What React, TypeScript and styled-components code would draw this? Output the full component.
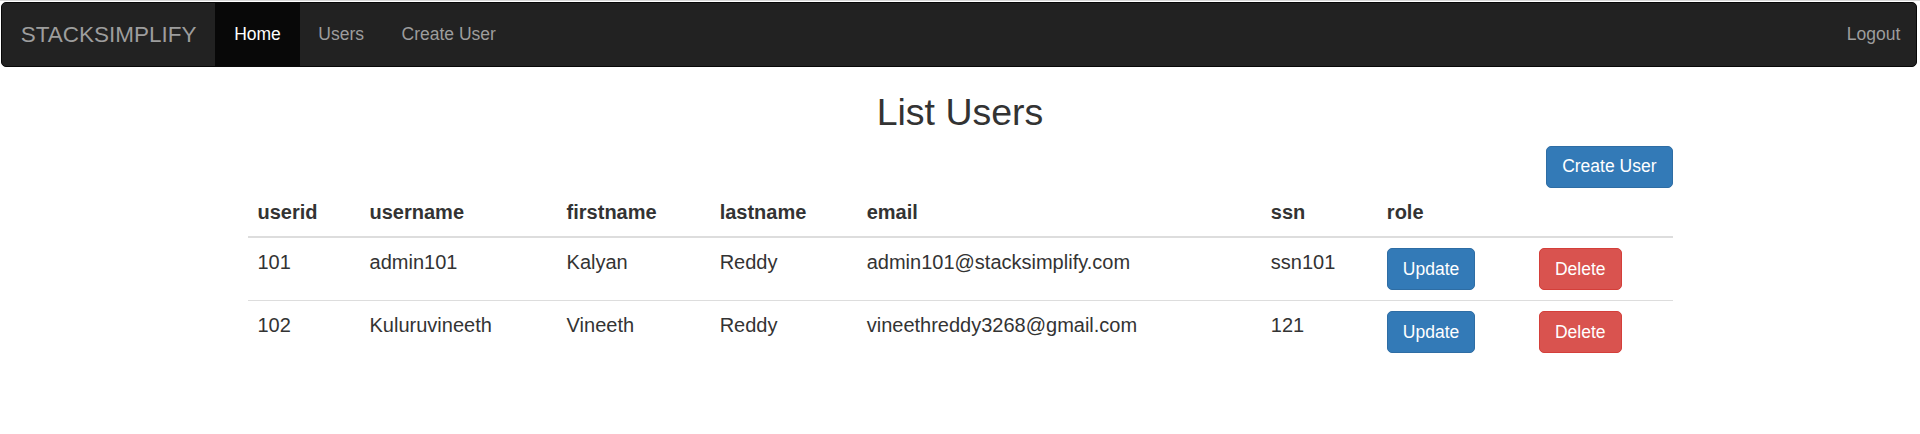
import React from "react";
import styled, { createGlobalStyle } from "styled-components";

const GlobalStyle = createGlobalStyle`
  html, body {
    margin: 0;
    padding: 0;
    background: #fff;
  }
  body {
    font-family: "Liberation Sans", Arial, Helvetica, sans-serif;
    font-size: 17.5px;
    line-height: 1.42857143;
    color: #333;
  }
  * { box-sizing: border-box; }
`;

const Page = styled.div`
  border-top: 1px solid #d6d6d6;
  padding-top: 1px;
`;

const Navbar = styled.nav`
  display: flex;
  justify-content: space-between;
  align-items: stretch;
  min-height: 65px;
  background: #222;
  border: 1.25px solid #080808;
  border-radius: 5px;
  margin: 0 3px 25px 1px;
`;

const NavGroup = styled.div<{ $right?: boolean }>`
  display: flex;
  align-items: stretch;
  margin-right: ${(p) => (p.$right ? "-3px" : "0")};
`;

const Brand = styled.a`
  display: block;
  height: 62.5px;
  padding: 18.75px;
  font-size: 22.5px;
  line-height: 25px;
  color: #9d9d9d;
  text-decoration: none;
`;

const NavLink = styled.a<{ $active?: boolean }>`
  display: block;
  padding: 18.75px;
  line-height: 25px;
  font-size: 17.5px;
  color: ${(p) => (p.$active ? "#fff" : "#9d9d9d")};
  background: ${(p) => (p.$active ? "#080808" : "transparent")};
  text-decoration: none;
`;

const Container = styled.div`
  width: 1462.5px;
  margin: 0 auto;
  padding: 0 18.75px;
`;

const Title = styled.h2`
  margin: 25px 0 12.5px;
  font-size: 37.5px;
  font-weight: 500;
  line-height: 1.1;
  text-align: center;
  color: #333;
`;

const Toolbar = styled.div`
  display: flex;
  justify-content: flex-end;
`;

const Button = styled.button<{ $variant: "primary" | "danger" }>`
  display: inline-block;
  font-family: inherit;
  font-size: 17.5px;
  line-height: 25px;
  padding: 7.5px 15px;
  border-radius: 5px;
  border: 1.25px solid
    ${(p) => (p.$variant === "primary" ? "#2e6da4" : "#d43f3a")};
  background: ${(p) => (p.$variant === "primary" ? "#337ab7" : "#d9534f")};
  color: #fff;
  cursor: pointer;
  white-space: nowrap;
  vertical-align: middle;
`;

const Table = styled.table`
  width: 100%;
  border-collapse: collapse;
  border-spacing: 0;
  margin-bottom: 25px;
  font-size: 20px;
  line-height: 1.42857143;
`;

const Th = styled.th`
  text-align: left;
  font-weight: bold;
  padding: 10px;
  vertical-align: bottom;
  border-bottom: 2.5px solid #ddd;
`;

const Td = styled.td`
  padding: 10px;
  vertical-align: top;
  border-top: 1.25px solid #ddd;
`;

const cols = [112, 197, 153, 147, 404, 116, 152, 143.5];

const users = [
  {
    userid: "101",
    username: "admin101",
    firstname: "Kalyan",
    lastname: "Reddy",
    email: "admin101@stacksimplify.com",
    ssn: "ssn101",
  },
  {
    userid: "102",
    username: "Kuluruvineeth",
    firstname: "Vineeth",
    lastname: "Reddy",
    email: "vineethreddy3268@gmail.com",
    ssn: "121",
  },
];

export default function App() {
  return (
    <>
      <GlobalStyle />
      <Page>
        <Navbar>
          <NavGroup>
            <Brand href="#">STACKSIMPLIFY</Brand>
            <NavLink href="#" $active>
              Home
            </NavLink>
            <NavLink href="#">Users</NavLink>
            <NavLink href="#">Create User</NavLink>
          </NavGroup>
          <NavGroup $right>
            <NavLink href="#">Logout</NavLink>
          </NavGroup>
        </Navbar>
        <Container>
          <Title>List Users</Title>
          <Toolbar>
            <Button $variant="primary">Create User</Button>
          </Toolbar>
          <Table>
            <colgroup>
              {cols.map((w, i) => (
                <col key={i} style={{ width: w }} />
              ))}
            </colgroup>
            <thead>
              <tr>
                <Th>userid</Th>
                <Th>username</Th>
                <Th>firstname</Th>
                <Th>lastname</Th>
                <Th>email</Th>
                <Th>ssn</Th>
                <Th>role</Th>
                <Th></Th>
              </tr>
            </thead>
            <tbody>
              {users.map((u) => (
                <tr key={u.userid}>
                  <Td>{u.userid}</Td>
                  <Td>{u.username}</Td>
                  <Td>{u.firstname}</Td>
                  <Td>{u.lastname}</Td>
                  <Td>{u.email}</Td>
                  <Td>{u.ssn}</Td>
                  <Td>
                    <Button $variant="primary">Update</Button>
                  </Td>
                  <Td>
                    <Button $variant="danger">Delete</Button>
                  </Td>
                </tr>
              ))}
            </tbody>
          </Table>
        </Container>
      </Page>
    </>
  );
}
